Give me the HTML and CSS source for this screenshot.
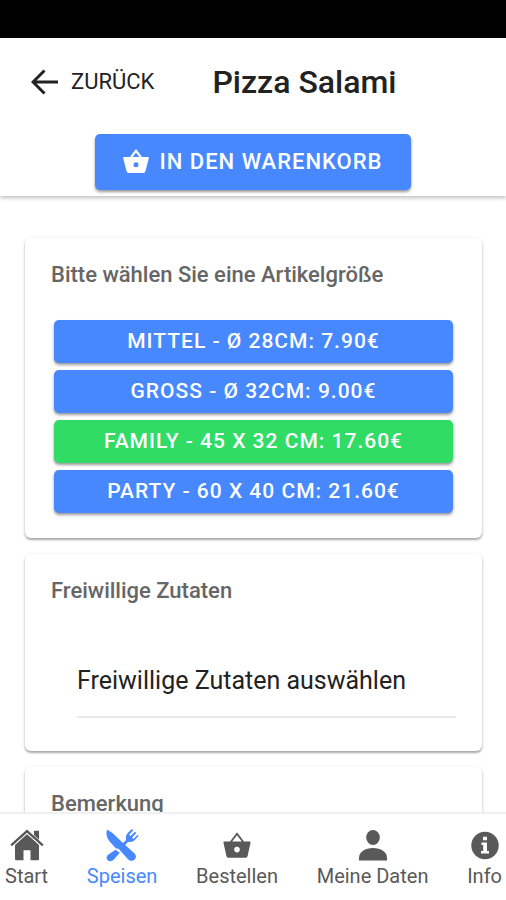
FILE: index.html
```html
<!DOCTYPE html>
<html lang="de">
<head>
<meta charset="utf-8">
<meta name="viewport" content="width=device-width, initial-scale=1">
<title>Pizza Salami</title>
<link rel="stylesheet" href="styles.css">
</head>
<body>
<div class="app">
  <div class="statusbar"></div>
  <header class="header">
    <div class="toolbar">
      <button class="back" type="button">
        <svg class="back-icon" viewBox="0 0 28 26" aria-hidden="true"><path d="M13.500 1.500 2 13l11.500 11.500M2 13h25" fill="none" stroke="currentColor" stroke-width="3"/></svg>
        ZURÜCK
      </button>
      <h1 class="title">Pizza Salami</h1>
    </div>
    <div class="action">
      <button class="btn btn-large" type="button">
        <svg class="btn-icon" viewBox="0 0 26 24" aria-hidden="true"><path fill="currentColor" fill-rule="evenodd" d="M7 8 13 0l6 8h6c.7 0 1 .5.800 1.200L22.500 22c-.3 1.300-1 2-2.300 2H5.800c-1.300 0-2-.7-2.300-2L.2 9.200C0 8.500.3 8 1 8Zm2.600 0h6.800L13 3.400ZM13 13.300a2.500 2.500 0 1 0 0 5 2.500 2.500 0 0 0 0-5Z"/></svg>
        IN DEN WARENKORB
      </button>
    </div>
  </header>

  <main class="content">
    <section class="card">
      <h2 class="card-title">Bitte wählen Sie eine Artikelgröße</h2>
      <div class="sizes">
        <button class="btn" type="button">MITTEL - Ø 28CM: 7.90€</button>
        <button class="btn" type="button">GROSS - Ø 32CM: 9.00€</button>
        <button class="btn btn-selected" type="button" aria-pressed="true">FAMILY - 45 X 32 CM: 17.60€</button>
        <button class="btn" type="button">PARTY - 60 X 40 CM: 21.60€</button>
      </div>
    </section>
    <section class="card">
      <h2 class="card-title"><label for="extras">Freiwillige Zutaten</label></h2>
      <div class="field">
        <select class="select" id="extras">
          <option>Freiwillige Zutaten auswählen</option>
        </select>
      </div>
    </section>
    <section class="card">
      <h2 class="card-title"><label for="remark">Bemerkung</label></h2>
      <div class="field">
        <textarea class="select" id="remark"></textarea>
      </div>
    </section>
  </main>

  <nav class="tabs">
    <a class="tab" href="#start">
      <svg class="tab-icon" viewBox="0 0 34 34" aria-hidden="true"><g fill="currentColor"><path d="M17 5.500 29 16.500V31c0 .8-.4 1.200-1.200 1.200H20.500v-10h-7v10H6.200C5.400 32.200 5 31.800 5 31V16.500Z"/><path d="M24 2.800h5v9l-5-4.800Z"/></g><path d="M1.200 17.300 17 3 32.800 17.300" fill="none" stroke="currentColor" stroke-width="2.400"/><path d="M3 18.300 17 5.700 31 18.300" fill="none" stroke="#fff" stroke-width="1"/></svg>
      Start
    </a>
    <a class="tab tab-active" href="#speisen" aria-current="page">
      <svg class="tab-icon" viewBox="0 0 34 34" aria-hidden="true"><g fill="currentColor"><path d="M2 1.500C.8 5.500 1.500 9.500 4.300 13l6.200 7c1.100 1 2.300.7 3.300 1L23 31.200c1.900 2 4.900 2.200 6.700.4s1.600-4.500-.3-6.300l-9.300-8.200L7.500 5Z"/><path d="M10.500 21.800 3.400 26.500c-2.200 1.600-2.300 4.300-.7 5.700 1.600 1.500 4.300 1.400 6.100-.6l6-6.800Z"/><path d="m17.500 15.500 3.600-3.500c-.7-3.200.2-5.600 2.100-7.500L26.900 1l1.300 1.200-4 4.500 1.300 1.300 4.500-4.300 1.300 1.300-4.200 4.600 1.300 1.300 4.300-4.200L33.500 8 30 11.800c-1.900 1.900-4.300 2.600-6.900 2l-3.300 3.800Z"/></g></svg>
      Speisen
    </a>
    <a class="tab" href="#bestellen">
      <svg class="tab-icon" viewBox="0 0 34 34" aria-hidden="true"><path fill="currentColor" fill-rule="evenodd" d="m10 13.500 6.200-8.200c.5-.6 1.100-.6 1.600 0l6.200 8.200h5.500c.9 0 1.200.5 1 1.300L27.600 28c-.3 1.200-1 1.800-2.200 1.800H8.600c-1.200 0-1.900-.6-2.200-1.800L3.500 14.800c-.2-.8.1-1.300 1-1.300Zm2.200 0h9.600L17 7.200ZM17 18.800a2.800 2.800 0 1 0 0 5.600 2.800 2.800 0 0 0 0-5.600Z"/></svg>
      Bestellen
    </a>
    <a class="tab" href="#daten">
      <svg class="tab-icon" viewBox="0 0 34 34" aria-hidden="true"><g fill="currentColor"><ellipse cx="17" cy="9.500" rx="6.800" ry="7.500"/><path d="M3 32.500v-2.700C3 24 9 20 17 20s14 4 14 9.800v2.700Z"/></g></svg>
      Meine Daten
    </a>
    <a class="tab" href="#info">
      <svg class="tab-icon" viewBox="0 0 34 34" aria-hidden="true"><circle cx="17" cy="17.500" r="13.700" fill="currentColor"/><path fill="#fff" d="M15 8.700h4v3.600h-4ZM13.500 14.500H19v8.500h2v2.500h-8V23h2.200v-6h-1.700Z"/></svg>
      Info
    </a>
  </nav>
</div>
</body>
</html>
```
FILE: styles.css
```css
* {
  box-sizing: border-box;
}

body {
  margin: 0;
  background: #fff;
  color: #222;
  font-family: Roboto, "Liberation Sans", sans-serif;
}

button,
select,
textarea {
  font: inherit;
  color: inherit;
}

.app {
  display: flex;
  flex-direction: column;
  height: 100vh;
}

.statusbar {
  flex: none;
  height: 38px;
  background: #000;
}

.header {
  flex: none;
  padding-bottom: 6px;
  box-shadow: 0 2px 4px rgba(0, 0, 0, 0.25);
}

.toolbar {
  display: flex;
  align-items: center;
  gap: 58px;
  height: 88px;
  padding: 0 31px;
}

.back {
  display: flex;
  align-items: center;
  gap: 12px;
  padding: 0;
  border: 0;
  background: none;
  font-size: 22px;
  line-height: 28px;
}

.back-icon {
  width: 28px;
  height: 26px;
}

.title {
  margin: 0;
  font-size: 32px;
  font-weight: 500;
  line-height: 40px;
}

.action {
  display: flex;
  justify-content: center;
  padding-top: 8px;
}

.btn {
  display: flex;
  align-items: center;
  justify-content: center;
  gap: 10px;
  height: 43px;
  padding: 0 28px 2px;
  border: 0;
  border-radius: 5px;
  background: #4788ff;
  box-shadow: 0 2px 3px rgba(0, 0, 0, 0.4);
  color: #fff;
  font-size: 21px;
  font-weight: 500;
  letter-spacing: 1px;
}

.btn-large {
  height: 56px;
  font-size: 22px;
}

.btn-selected {
  background: #30dc64;
}

.btn-icon {
  width: 26px;
  height: 24px;
}

.content {
  flex: 1;
  min-height: 0;
  padding: 42px 24px 0 25px;
  overflow: hidden;
}

.card {
  margin-bottom: 16px;
  padding: 22px 26px 25px;
  border-radius: 6px;
  box-shadow: 0 2px 2px rgba(0, 0, 0, 0.28), 0 1px 4px rgba(0, 0, 0, 0.12);
}

.card-title {
  margin: 0;
  color: #666;
  font-size: 22px;
  font-weight: 500;
  line-height: 30px;
}

.sizes {
  display: grid;
  gap: 7px;
  padding: 30px 3px 0;
}

.field {
  padding: 52px 0 8px 26px;
}

.select {
  display: block;
  width: 100%;
  height: 60px;
  padding: 0 0 14px;
  border: 0;
  border-bottom: 2px solid #e8e8e8;
  border-radius: 0;
  background: none;
  font-size: 25px;
  appearance: none;
  resize: none;
}

.tabs {
  display: flex;
  flex: none;
  justify-content: space-between;
  height: 88px;
  padding: 14px 4px 0 5px;
  border-top: 2px solid #f0f0f0;
  background: #fff;
}

.tab {
  display: flex;
  flex-direction: column;
  align-items: center;
  gap: 1px;
  color: #595959;
  font-size: 20px;
  line-height: 26px;
  text-decoration: none;
}

.tab-active {
  color: #4788ff;
}

.tab-icon {
  width: 34px;
  height: 34px;
}
```
